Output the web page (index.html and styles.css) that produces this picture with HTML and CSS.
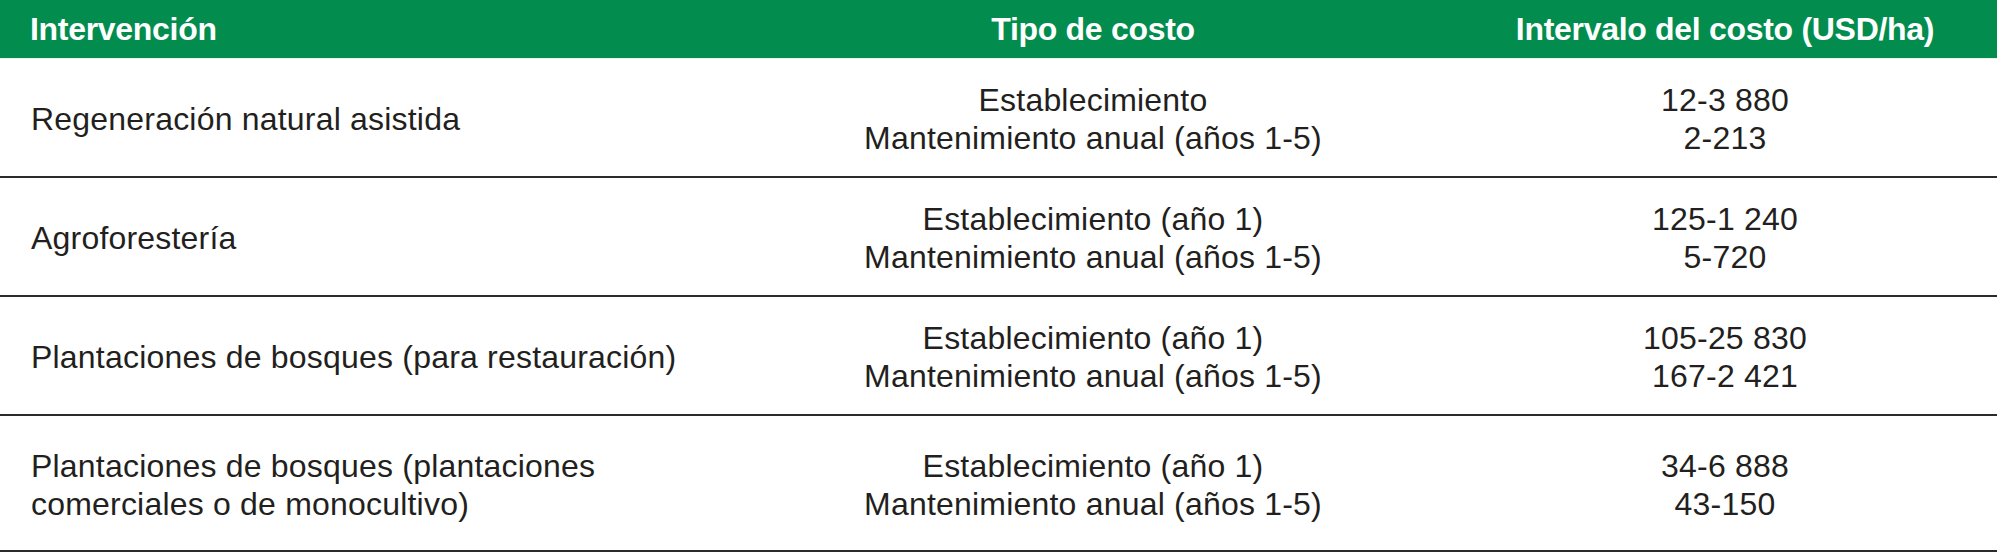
FILE: index.html
```html
<!DOCTYPE html>
<html lang="es">
<head>
<meta charset="utf-8">
<title>Costos de intervenciones</title>
<link rel="stylesheet" href="styles.css">
</head>
<body>
<table class="cost-table">
  <colgroup>
    <col class="col-int">
    <col class="col-tipo">
    <col class="col-rango">
  </colgroup>
  <thead>
    <tr>
      <th class="left">Intervención</th>
      <th>Tipo de costo</th>
      <th>Intervalo del costo (USD/ha)</th>
    </tr>
  </thead>
  <tbody>
    <tr>
      <td class="left">Regeneración natural asistida</td>
      <td>Establecimiento<br>Mantenimiento anual (años 1-5)</td>
      <td>12-3 880<br>2-213</td>
    </tr>
    <tr>
      <td class="left">Agroforestería</td>
      <td>Establecimiento (año 1)<br>Mantenimiento anual (años 1-5)</td>
      <td>125-1 240<br>5-720</td>
    </tr>
    <tr>
      <td class="left">Plantaciones de bosques (para restauración)</td>
      <td>Establecimiento (año 1)<br>Mantenimiento anual (años 1-5)</td>
      <td>105-25 830<br>167-2 421</td>
    </tr>
    <tr class="tall">
      <td class="left">Plantaciones de bosques (plantaciones<br>comerciales o de monocultivo)</td>
      <td>Establecimiento (año 1)<br>Mantenimiento anual (años 1-5)</td>
      <td>34-6 888<br>43-150</td>
    </tr>
  </tbody>
</table>
</body>
</html>
```

FILE: styles.css
```css
html, body {
  margin: 0;
  padding: 0;
  background: #ffffff;
}

body {
  font-family: "Liberation Sans", Arial, sans-serif;
  color: #231f20;
}

.cost-table {
  width: 1997px;
  border-collapse: separate;
  border-spacing: 0;
  table-layout: fixed;
}

.col-int { width: 733px; }
.col-tipo { width: 720px; }
.col-rango { width: 544px; }

.cost-table th {
  background: #028d4f;
  color: #ffffff;
  font-weight: bold;
  font-size: 32px;
  letter-spacing: -0.3px;
  line-height: 38px;
  height: 59px;
  padding: 0;
  box-sizing: border-box;
  text-align: center;
  vertical-align: middle;
  border-bottom: 1px solid #e6f2ea;
}

.cost-table th.left {
  text-align: left;
  padding-left: 30px;
}

.cost-table td {
  font-size: 32px;
  line-height: 38px;
  letter-spacing: 0.2px;
  padding: 22px 0 19px;
  text-align: center;
  vertical-align: middle;
  border-bottom: 2px solid #2b2b2b;
}

.cost-table td.left {
  text-align: left;
  padding-left: 31px;
}

.cost-table tr.tall td {
  padding-top: 31px;
  padding-bottom: 27px;
}
```
